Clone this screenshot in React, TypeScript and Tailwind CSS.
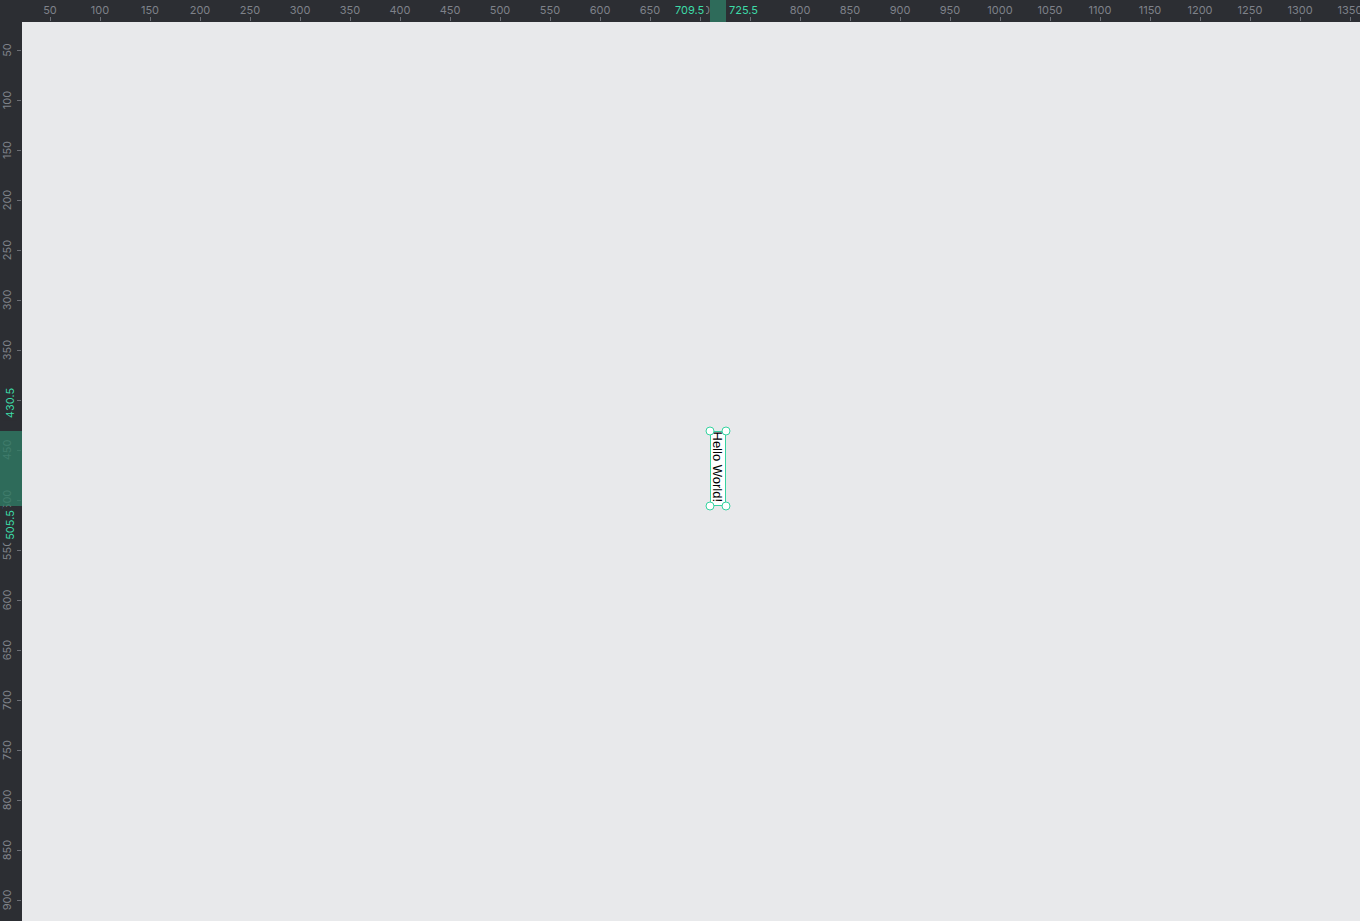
import React from "react";

const topMarks = Array.from({ length: 27 }, (_, i) => (i + 1) * 50);
const leftMarks = Array.from({ length: 18 }, (_, i) => (i + 1) * 50);

const font = { fontFamily: "Inter, 'Liberation Sans', sans-serif" };

function TopCell({ m }: { m: number }) {
  return (
    <div className="flex h-[22px] w-[50px] shrink-0 flex-col items-center pt-[3px]">
      <span className="whitespace-nowrap text-[11px] leading-[14px] text-[#7f828a]">{m}</span>
      <span className="ml-px mt-[0px] h-[4px] w-px bg-[#6b6e75]" />
    </div>
  );
}

function LeftCell({ m }: { m: number }) {
  return (
    <div className="flex h-[50px] w-[22px] shrink-0 flex-row items-center justify-end">
      <div className="flex h-[14px] w-[14px] items-center justify-center">
        <span className="-rotate-90 whitespace-nowrap text-[11px] leading-[14px] text-[#7f828a]">{m}</span>
      </div>
      <span className="ml-[3px] mr-px mt-px h-px w-[4px] bg-[#6b6e75]" />
    </div>
  );
}

export default function App() {
  return (
    <div className="flex h-[921px] w-[1360px] flex-col overflow-hidden bg-[#2c2e33]" style={font}>
      {/* top ruler */}
      <div className="relative flex h-[22px] w-full shrink-0 bg-[#2c2e33] pl-[25px]">
        {topMarks.map((m) => (
          <TopCell key={m} m={m} />
        ))}
        <div className="absolute left-[709.5px] top-0 h-[22px] w-[16px] bg-[rgba(48,122,100,0.8)]" />
        <span className="absolute left-[673px] top-[3px] bg-[#2c2e33] px-[2px] text-[11px] leading-[14px] text-[#3ddba7]">709.5</span>
        <span className="absolute left-[727px] top-[3px] bg-[#2c2e33] px-[2px] text-[11px] leading-[14px] text-[#3ddba7]">725.5</span>
      </div>
      <div className="flex min-h-0 flex-1">
        {/* left ruler */}
        <div className="relative flex w-[22px] shrink-0 flex-col bg-[#2c2e33] pt-[3px]">
          {leftMarks.map((m) => (
            <LeftCell key={m} m={m} />
          ))}
          <div className="absolute left-0 top-[408.5px] h-[75px] w-[22px] bg-[rgba(48,122,100,0.8)]" />
          <span className="absolute left-[10px] top-[381px] -translate-x-1/2 -translate-y-1/2 -rotate-90 whitespace-nowrap bg-[#2c2e33] px-[2px] text-[11px] leading-[14px] text-[#3ddba7]">
            430.5
          </span>
          <span className="absolute left-[10px] top-[503px] -translate-x-1/2 -translate-y-1/2 -rotate-90 whitespace-nowrap bg-[#2c2e33] px-[3px] text-[11px] leading-[14px] text-[#3ddba7]">
            505.5
          </span>
        </div>
        {/* canvas */}
        <div className="relative flex-1 bg-[#e8e9eb]">
          <div className="absolute left-[687.5px] top-[408.5px] h-[75px] w-[16px] overflow-hidden bg-white">
            <div
              className="absolute left-1/2 top-1/2 flex h-[16px] w-[75px] -translate-x-1/2 -translate-y-1/2 rotate-90 items-center overflow-hidden whitespace-nowrap pl-[1px] text-[13px] leading-[15px] text-black"
              style={{ fontFamily: "'Liberation Sans', Arial, sans-serif" }}
            >
              Hello World!
            </div>
          </div>
          <div className="absolute left-[687.5px] top-[408.5px] h-[75px] w-[16px] border-[1.5px] border-[#36d3a0]" />
          {[
            [687.5, 408.5],
            [703.5, 408.5],
            [687.5, 483.5],
            [703.5, 483.5],
          ].map(([x, y], i) => (
            <span
              key={i}
              className="absolute h-[9px] w-[9px] -translate-x-1/2 -translate-y-1/2 rounded-full border-[1.5px] border-[#36d3a0] bg-white"
              style={{ left: x, top: y }}
            />
          ))}
        </div>
      </div>
    </div>
  );
}
